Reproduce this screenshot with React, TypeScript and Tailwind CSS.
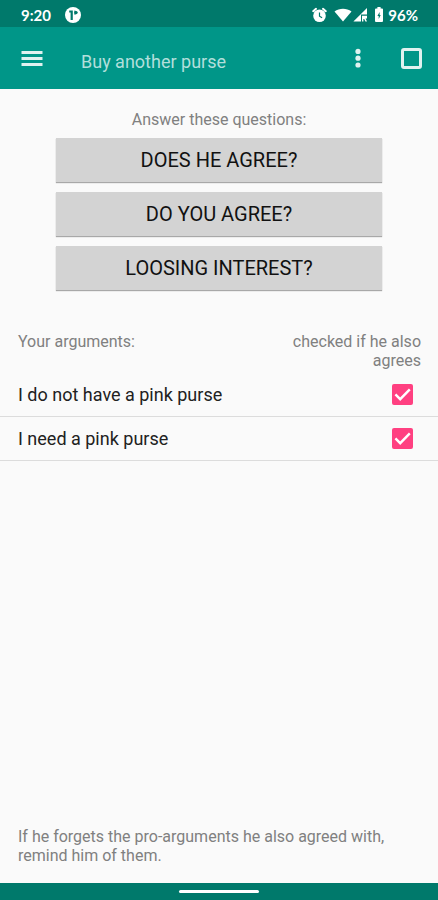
import React from 'react';

interface Argument {
    id: string;
    text: string;
}

const questions: string[] = ['Does he agree?', 'Do you agree?', 'Loosing interest?'];

const argumentList: Argument[] = [
    { id: 'no-pink-purse', text: 'I do not have a pink purse' },
    { id: 'need-pink-purse', text: 'I need a pink purse' },
];

const StatusBar: React.FC = () => {
    return (
        <div className="flex h-[27px] items-center justify-between bg-[#00796b] pt-[2px] pr-[20px] pl-[21px] font-['Lato',sans-serif] text-[15px] leading-[20px] font-bold text-white">
            <div className="flex items-center gap-[14px]">
                <span>9:20</span>
                <svg viewBox="0 0 16 16" className="size-[16px]" aria-hidden="true">
                    <circle cx="8" cy="8" r="8" fill="#fff" />
                    <path d="M4.2 3.4h3.6v9.6H5.6V5.6H4.2z" fill="#00796b" />
                    <path d="M9.4 3.4a2.2 2.2 0 0 1 0 4.4z" fill="#00796b" />
                    <circle cx="11" cy="5.6" r="1.7" fill="#00796b" />
                </svg>
            </div>
            <div className="flex items-center">
                {/* Alarm */}
                <svg viewBox="0 0 15 16" className="mr-[7px] h-[16px] w-[15px]" aria-hidden="true">
                    <circle cx="7.5" cy="8.8" r="6.3" fill="#fff" />
                    <path d="M1.2 4.2L4 1.8M13.8 4.2L11 1.8" stroke="#fff" strokeWidth="2" strokeLinecap="round" />
                    <path d="M7.5 5.4v3.8l2.6 1.5" fill="none" stroke="#00796b" strokeWidth="1.2" />
                </svg>
                {/* Wifi */}
                <svg viewBox="0 0 18 14" className="mr-[1px] h-[14px] w-[18px]" aria-hidden="true">
                    <path d="M0.5 3.6C5.4-.1 12.6-.1 17.5 3.6L9 13.6z" fill="#fff" />
                </svg>
                {/* Mobile signal */}
                <svg viewBox="0 0 15 14" className="mr-[7px] h-[14px] w-[15px]" aria-hidden="true">
                    <path d="M14 0v6.4H8V13.6H0.4z" fill="#fff" />
                    <path d="M9 7.8h5v2.6h-1.4L14 13.6h-1.6l-1.2-2.6H10.4v2.6H9z" fill="#fff" />
                </svg>
                {/* Battery */}
                <svg viewBox="0 0 8 15" className="mr-[5px] h-[15px] w-[8px]" aria-hidden="true">
                    <path d="M2.4 0h3.2v1.6H7a1 1 0 0 1 1 1V14a1 1 0 0 1-1 1H1a1 1 0 0 1-1-1V2.6a1 1 0 0 1 1-1h1.4z" fill="#fff" />
                    <path d="M4.6 5L2.4 9h1.3v3L5.7 8H4.6z" fill="#00796b" />
                </svg>
                <span>96%</span>
            </div>
        </div>
    );
};

const Toolbar: React.FC = () => {
    return (
        <header className="flex h-[62px] items-center bg-[#009688] pr-[16px] pl-[21px]">
            <button type="button" aria-label="Menu" className="text-[#e0f2f0]">
                <svg viewBox="0 0 22 16" className="h-[16px] w-[22px]" aria-hidden="true">
                    <path d="M0.5 2.5h21M0.5 8.5h21M0.5 14.5h21" stroke="currentColor" strokeWidth="3" />
                </svg>
            </button>
            <h1 className="flex-1 pt-[8px] pl-[38px] text-[18px] leading-[22px] text-[#b2dfdb]">Buy another purse</h1>
            <button type="button" aria-label="More options" className="mr-[40px] text-[#e0f2f0]">
                <svg viewBox="0 0 6 20" className="h-[20px] w-[6px]" fill="currentColor" aria-hidden="true">
                    <circle cx="3" cy="3.4" r="2.6" />
                    <circle cx="3" cy="10.2" r="2.6" />
                    <circle cx="3" cy="17" r="2.6" />
                </svg>
            </button>
            <input
                type="checkbox"
                aria-label="Done"
                className="size-[21px] appearance-none rounded-[3px] border-[3px] border-[#e0f2f0] checked:bg-[#e0f2f0]"
            />
        </header>
    );
};

const ArgumentRow: React.FC<Argument> = ({ id, text }) => {
    return (
        <li className="flex h-[44px] items-center justify-between border-b border-[#dcdcdc] pr-[25px] pl-[18px]">
            <label htmlFor={id} className="text-[18px] leading-[22px] text-[#212121]">{text}</label>
            <span className="grid size-[21px]">
                <input
                    id={id}
                    type="checkbox"
                    defaultChecked
                    className="peer col-start-1 row-start-1 size-[21px] appearance-none rounded-[2px] border-[2px] border-[#757575] checked:border-[#ff4081] checked:bg-[#ff4081]"
                />
                <svg
                    viewBox="0 0 21 21"
                    className="pointer-events-none invisible col-start-1 row-start-1 size-[21px] peer-checked:visible"
                    aria-hidden="true"
                >
                    <path d="M3.4 10.4L8.2 15.2L17.8 5.4" fill="none" stroke="#fff" strokeWidth="2.4" />
                </svg>
            </span>
        </li>
    );
};

const App: React.FC = () => {
    return (
        <div className="flex min-h-screen flex-col bg-[#fafafa] font-['Roboto',sans-serif] text-[16px] leading-[19px] text-[#808080]">
            <StatusBar />
            <Toolbar />

            <main className="flex flex-1 flex-col pt-[21px]">
                <section className="flex flex-col px-[56px]">
                    <p className="mb-[9px] text-center">Answer these questions:</p>
                    <div className="flex flex-col gap-[10px]">
                        {questions.map((question) => (
                            <button
                                key={question}
                                type="button"
                                className="h-[44px] bg-[#d3d3d3] text-[20px] leading-[24px] text-[#111111] uppercase shadow-[0_1px_1px_#a8a8a8]"
                            >
                                {question}
                            </button>
                        ))}
                    </div>
                </section>

                <section className="pt-[42px]">
                    <div className="flex justify-between pr-[17px] pl-[18px]">
                        <h2>Your arguments:</h2>
                        <p className="w-[140px] text-right">checked if he also agrees</p>
                    </div>
                    <ul className="mt-[3px]">
                        {argumentList.map((argument) => (
                            <ArgumentRow key={argument.id} {...argument} />
                        ))}
                    </ul>
                </section>

                <p className="mt-auto px-[18px] pb-[18px]">
                    If he forgets the pro-arguments he also agreed with, remind him of them.
                </p>
            </main>

            {/* Gesture bar */}
            <div className="flex h-[17px] items-center justify-center bg-[#00796b]">
                <div className="h-[3px] w-[80px] rounded-full bg-white" />
            </div>
        </div>
    );
};

export default App;
